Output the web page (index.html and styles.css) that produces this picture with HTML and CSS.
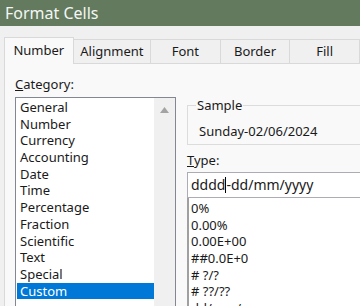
FILE: index.html
```html
<!DOCTYPE html>
<html lang="en">
  <head>
    <meta charset="UTF-8" />
    <title>Format Cells</title>
    <link rel="stylesheet" href="styles.css">
  </head>
  <body>
    <div class="titlebar">Format Cells</div>
    <div class="dialog">
      <div class="tabs">
        <div class="tab active">Number</div>
        <div class="tab">Alignment</div>
        <div class="tab">Font</div>
        <div class="tab">Border</div>
        <div class="tab">Fill</div>
      </div>
      <div class="panel">
        <div class="left">
          <div class="label"><u>C</u>ategory:</div>
          <div class="listbox">
            <ul class="items">
              <li>General</li>
              <li>Number</li>
              <li>Currency</li>
              <li>Accounting</li>
              <li>Date</li>
              <li>Time</li>
              <li>Percentage</li>
              <li>Fraction</li>
              <li>Scientific</li>
              <li>Text</li>
              <li>Special</li>
              <li class="selected">Custom</li>
            </ul>
            <div class="scrollbar">
              <svg width="9" height="6" viewBox="0 0 9 6"><polygon points="0,6 4.5,0 9,6" fill="#a3a3a3" /></svg>
            </div>
          </div>
        </div>
        <div class="right">
          <fieldset class="sample">
            <legend>Sample</legend>
            <div class="sample-value">Sunday-02/06/2024</div>
          </fieldset>
          <div class="label type-label"><u>T</u>ype:</div>
          <div class="type-input">dddd<span class="caret"></span>-dd/mm/yyyy</div>
          <ul class="formats">
            <li>0%</li>
            <li>0.00%</li>
            <li>0.00E+00</li>
            <li>##0.0E+0</li>
            <li># ?/?</li>
            <li># ??/??</li>
            <li>dd/mm/yyyy</li>
          </ul>
        </div>
      </div>
    </div>
  </body>
</html>
```

FILE: styles.css
```css
* {
  margin: 0;
  padding: 0;
  box-sizing: border-box;
}

body {
  font-family: "Noto Sans", "Open Sans", sans-serif;
  font-size: 13px;
  color: #1a1a1a;
  width: 360px;
  height: 306px;
  overflow: hidden;
  background: #f0f0f0;
}

.titlebar {
  height: 26px;
  background: #637a5e;
  color: #f4f6f3;
  font-size: 16px;
  line-height: 26px;
  padding-left: 5px;
}

.dialog {
  padding: 11px 0 0 4px;
}

.tabs {
  display: flex;
  align-items: flex-end;
  height: 26px;
}

.tab {
  height: 24px;
  line-height: 22px;
  text-align: center;
  border: 1px solid #d9d9d9;
  border-bottom: none;
  border-left: none;
  background: #f0f0f0;
}

.tab:nth-child(1) { width: 72px; }
.tab:nth-child(2) { width: 80px; }
.tab:nth-child(3) { width: 72px; }
.tab:nth-child(4) { width: 72px; }
.tab:nth-child(5) { width: 72px; }

.tab.active {
  height: 27px;
  line-height: 24px;
  background: #f9f9f9;
  border-left: 1px solid #d9d9d9;
  position: relative;
  z-index: 1;
  margin-bottom: -1px;
}

.panel {
  background: #f9f9f9;
  border-top: 1px solid #d9d9d9;
  border-left: 1px solid #d9d9d9;
  height: 243px;
  display: flex;
  padding: 12px 0 0 10px;
  overflow: hidden;
}

.label {
  height: 21px;
  line-height: 17px;
}

.left {
  width: 161px;
}

.listbox {
  height: 209px;
  border: 1px solid #828790;
  border-bottom: none;
  background: #ffffff;
  display: flex;
}

.items {
  list-style: none;
  flex: 1;
  padding: 1px 0 0 1px;
}

.items li {
  height: 16.7px;
  line-height: 16.7px;
  padding-left: 3px;
}

.items li.selected {
  background: #0078d7;
  color: #ffffff;
}

.scrollbar {
  width: 21px;
  background: #f0f0f0;
  display: flex;
  justify-content: center;
  padding-top: 9px;
}

.right {
  flex: 1;
  margin-left: 11px;
  padding-top: 22px;
}

.sample {
  border: 1px solid #dcdcdc;
  border-right: none;
  height: 47px;
  padding-left: 11px;
}

.sample legend {
  padding: 0 1px;
  margin-left: -3px;
  line-height: 14px;
}

.sample-value {
  line-height: 20px;
  padding-top: 9px;
}

.type-label {
  margin-top: 7px;
  height: 20px;
}

.type-input {
  height: 26px;
  border: 1px solid #abadb3;
  border-right: none;
  background: #ffffff;
  line-height: 24px;
  padding-left: 3px;
  font-size: 14px;
}

.caret {
  display: inline-block;
  width: 1px;
  height: 16px;
  background: #000000;
  vertical-align: -3px;
}

.formats {
  list-style: none;
  height: 108px;
  border-left: 2px solid #a0a0a0;
  background: #ffffff;
  padding-top: 2px;
}

.formats li {
  height: 16.7px;
  line-height: 16.7px;
  padding-left: 2px;
}
```
